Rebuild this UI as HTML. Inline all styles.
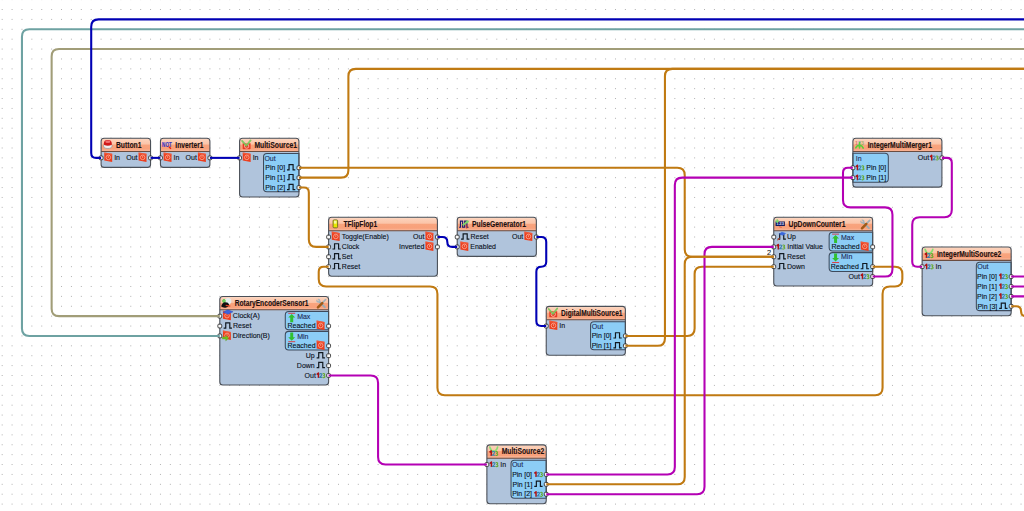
<!DOCTYPE html><html><head><meta charset="utf-8"><style>
*{margin:0;padding:0}
html,body{width:1024px;height:511px;overflow:hidden;background:#fff}
svg{position:absolute;left:0;top:0;font-family:"Liberation Sans",sans-serif}
</style></head><body>
<svg width="1024" height="511" viewBox="0 0 1035.180 516.579">
<defs>
<pattern id="dots" x="1.7" y="9.1" width="10" height="10" patternUnits="userSpaceOnUse"><rect x="0" y="0" width="1" height="1" fill="#b0b0b0"/></pattern>
<linearGradient id="hg" x1="0" y1="0" x2="0" y2="1">
<stop offset="0" stop-color="#fde2d0"/><stop offset="0.12" stop-color="#fcd0b8"/><stop offset="0.45" stop-color="#fbc4a8"/>
<stop offset="0.5" stop-color="#f8a47e"/><stop offset="0.82" stop-color="#f8a07a"/><stop offset="0.88" stop-color="#f9b090"/><stop offset="1" stop-color="#f9b090"/>
</linearGradient>
</defs>
<rect x="0" y="0" width="1040" height="520" fill="url(#dots)"/>
<rect x="102.20" y="139.70" width="50.00" height="29.50" rx="3" fill="#b0c4dc"/>
<path d="M102.20 153.20 V142.70 Q102.20 139.70 105.20 139.70 H149.20 Q152.20 139.70 152.20 142.70 V153.20 Z" fill="url(#hg)"/>
<line x1="102.20" y1="153.20" x2="152.20" y2="153.20" stroke="#6a4c40" stroke-width="1.1"/>
<rect x="102.20" y="139.70" width="50.00" height="29.50" rx="3" fill="none" stroke="#4a4f57" stroke-width="1.1"/>
<g transform="translate(102.20 139.70)"><ellipse cx="6.8" cy="7.8" rx="4.3" ry="2.6" fill="#f0f0f0" stroke="#909090" stroke-width="0.7"/><path d="M2.8 5.2 Q2.8 1.8 6.8 1.8 Q10.8 1.8 10.8 5.2 V6.6 Q6.8 8.8 2.8 6.6 Z" fill="#d01818"/><ellipse cx="6.8" cy="3.6" rx="2.6" ry="1.3" fill="#f07070"/></g>
<text x="117.20" y="149.35" font-size="8.40" font-weight="bold" text-anchor="start" fill="#1c1010" stroke="#1c1010" stroke-width="0.12" textLength="25.80" lengthAdjust="spacingAndGlyphs">Button1</text>
<g transform="translate(105.40 154.10)"><path d="M0 0 L8 1.4 L8 9.6 L0 8.2 Z" fill="#ec3e1e"/><path d="M0 0 L8 1.4 L8 3 L0 1.6 Z" fill="#f46848" opacity="0.6"/><circle cx="4.1" cy="5" r="2.3" fill="none" stroke="#fcc8b8" stroke-width="0.65"/><path d="M4.1 3.6 V5.6" stroke="#fcc8b8" stroke-width="0.6"/></g>
<text x="115.40" y="161.90" font-size="7.70" text-anchor="start" fill="#0a1020" stroke="#0a1020" stroke-width="0.12" textLength="5.91" lengthAdjust="spacingAndGlyphs">In</text>
<g transform="translate(140.10 154.10)"><path d="M0 0 L8 1.4 L8 9.6 L0 8.2 Z" fill="#ec3e1e"/><path d="M0 0 L8 1.4 L8 3 L0 1.6 Z" fill="#f46848" opacity="0.6"/><circle cx="4.1" cy="5" r="2.3" fill="none" stroke="#fcc8b8" stroke-width="0.65"/><path d="M4.1 3.6 V5.6" stroke="#fcc8b8" stroke-width="0.6"/></g>
<text x="139.00" y="161.90" font-size="7.70" text-anchor="end" fill="#0a1020" stroke="#0a1020" stroke-width="0.12" textLength="11.42" lengthAdjust="spacingAndGlyphs">Out</text>
<rect x="162.20" y="139.70" width="50.00" height="29.50" rx="3" fill="#b0c4dc"/>
<path d="M162.20 153.20 V142.70 Q162.20 139.70 165.20 139.70 H209.20 Q212.20 139.70 212.20 142.70 V153.20 Z" fill="url(#hg)"/>
<line x1="162.20" y1="153.20" x2="212.20" y2="153.20" stroke="#6a4c40" stroke-width="1.1"/>
<rect x="162.20" y="139.70" width="50.00" height="29.50" rx="3" fill="none" stroke="#4a4f57" stroke-width="1.1"/>
<g transform="translate(162.20 139.70)"><text x="1.7" y="8.9" font-size="7.6" font-weight="bold" fill="#3434c4" stroke="#3434c4" stroke-width="0.15" textLength="9.8" lengthAdjust="spacingAndGlyphs">NOT</text><path d="M8.6 8.6 L10.6 10.6" stroke="#e82010" stroke-width="1.4"/></g>
<text x="177.20" y="149.35" font-size="8.40" font-weight="bold" text-anchor="start" fill="#1c1010" stroke="#1c1010" stroke-width="0.12" textLength="28.50" lengthAdjust="spacingAndGlyphs">Inverter1</text>
<g transform="translate(165.40 154.10)"><path d="M0 0 L8 1.4 L8 9.6 L0 8.2 Z" fill="#ec3e1e"/><path d="M0 0 L8 1.4 L8 3 L0 1.6 Z" fill="#f46848" opacity="0.6"/><circle cx="4.1" cy="5" r="2.3" fill="none" stroke="#fcc8b8" stroke-width="0.65"/><path d="M4.1 3.6 V5.6" stroke="#fcc8b8" stroke-width="0.6"/></g>
<text x="175.40" y="161.90" font-size="7.70" text-anchor="start" fill="#0a1020" stroke="#0a1020" stroke-width="0.12" textLength="5.91" lengthAdjust="spacingAndGlyphs">In</text>
<g transform="translate(200.10 154.10)"><path d="M0 0 L8 1.4 L8 9.6 L0 8.2 Z" fill="#ec3e1e"/><path d="M0 0 L8 1.4 L8 3 L0 1.6 Z" fill="#f46848" opacity="0.6"/><circle cx="4.1" cy="5" r="2.3" fill="none" stroke="#fcc8b8" stroke-width="0.65"/><path d="M4.1 3.6 V5.6" stroke="#fcc8b8" stroke-width="0.6"/></g>
<text x="199.00" y="161.90" font-size="7.70" text-anchor="end" fill="#0a1020" stroke="#0a1020" stroke-width="0.12" textLength="11.42" lengthAdjust="spacingAndGlyphs">Out</text>
<rect x="242.20" y="139.70" width="60.00" height="59.50" rx="3" fill="#b0c4dc"/>
<path d="M302.20 155.20 H302.20 V193.80 H269.90 Q266.40 193.80 266.40 190.30 V158.70 Q266.40 155.20 269.90 155.20 Z" fill="#8ccdf6" stroke="#3e4a5c" stroke-width="1.05"/>
<path d="M242.20 153.20 V142.70 Q242.20 139.70 245.20 139.70 H299.20 Q302.20 139.70 302.20 142.70 V153.20 Z" fill="url(#hg)"/>
<line x1="242.20" y1="153.20" x2="302.20" y2="153.20" stroke="#6a4c40" stroke-width="1.1"/>
<rect x="242.20" y="139.70" width="60.00" height="59.50" rx="3" fill="none" stroke="#4a4f57" stroke-width="1.1"/>
<g transform="translate(242.20 139.70)"><path d="M3.1 5 H11.1 V10.4 Q11.1 11.1 10.4 11.1 H3.8 Q3.1 11.1 3.1 10.4 Z" fill="#e83a22"/><circle cx="7.1" cy="8" r="2.2" fill="none" stroke="#fdd8c8" stroke-width="0.7"/><path d="M2.5 2.7 L6.8 7.6 L11.1 2.2" fill="none" stroke="#74c85c" stroke-width="1.8" stroke-linecap="round" opacity="0.9"/></g>
<text x="257.20" y="149.35" font-size="8.40" font-weight="bold" text-anchor="start" fill="#1c1010" stroke="#1c1010" stroke-width="0.12" textLength="43.10" lengthAdjust="spacingAndGlyphs">MultiSource1</text>
<g transform="translate(245.40 154.10)"><path d="M0 0 L8 1.4 L8 9.6 L0 8.2 Z" fill="#ec3e1e"/><path d="M0 0 L8 1.4 L8 3 L0 1.6 Z" fill="#f46848" opacity="0.6"/><circle cx="4.1" cy="5" r="2.3" fill="none" stroke="#fcc8b8" stroke-width="0.65"/><path d="M4.1 3.6 V5.6" stroke="#fcc8b8" stroke-width="0.6"/></g>
<text x="255.40" y="161.90" font-size="7.70" text-anchor="start" fill="#0a1020" stroke="#0a1020" stroke-width="0.12" textLength="5.91" lengthAdjust="spacingAndGlyphs">In</text>
<text x="267.30" y="162.40" font-size="7.70" text-anchor="start" fill="#202a58" stroke="#202a58" stroke-width="0.12" textLength="11.42" lengthAdjust="spacingAndGlyphs">Out</text>
<path d="M290.10 171.70 h2.1 v-5.3 h4.1 v5.3 h2.2" fill="none" stroke="#101820" stroke-width="1.2"/>
<text x="288.20" y="171.90" font-size="7.70" text-anchor="end" fill="#0a1020" stroke="#0a1020" stroke-width="0.12" textLength="20.08" lengthAdjust="spacingAndGlyphs">Pin [0]</text>
<path d="M290.10 181.70 h2.1 v-5.3 h4.1 v5.3 h2.2" fill="none" stroke="#101820" stroke-width="1.2"/>
<text x="288.20" y="181.90" font-size="7.70" text-anchor="end" fill="#0a1020" stroke="#0a1020" stroke-width="0.12" textLength="20.08" lengthAdjust="spacingAndGlyphs">Pin [1]</text>
<path d="M290.10 191.70 h2.1 v-5.3 h4.1 v5.3 h2.2" fill="none" stroke="#101820" stroke-width="1.2"/>
<text x="288.20" y="191.90" font-size="7.70" text-anchor="end" fill="#0a1020" stroke="#0a1020" stroke-width="0.12" textLength="20.08" lengthAdjust="spacingAndGlyphs">Pin [2]</text>
<rect x="332.20" y="219.70" width="110.00" height="59.50" rx="3" fill="#b0c4dc"/>
<path d="M332.20 233.20 V222.70 Q332.20 219.70 335.20 219.70 H439.20 Q442.20 219.70 442.20 222.70 V233.20 Z" fill="url(#hg)"/>
<line x1="332.20" y1="233.20" x2="442.20" y2="233.20" stroke="#6a4c40" stroke-width="1.1"/>
<rect x="332.20" y="219.70" width="110.00" height="59.50" rx="3" fill="none" stroke="#4a4f57" stroke-width="1.1"/>
<g transform="translate(332.20 219.70)"><rect x="4.5" y="2.6" width="4.6" height="8" rx="1" fill="#e8e800" stroke="#6c6c20" stroke-width="0.9"/><rect x="5.4" y="3.4" width="2.6" height="3" fill="#f8f8a0"/></g>
<text x="347.20" y="229.35" font-size="8.40" font-weight="bold" text-anchor="start" fill="#1c1010" stroke="#1c1010" stroke-width="0.12" textLength="34.10" lengthAdjust="spacingAndGlyphs">TFlipFlop1</text>
<g transform="translate(335.40 234.10)"><path d="M0 0 L8 1.4 L8 9.6 L0 8.2 Z" fill="#ec3e1e"/><path d="M0 0 L8 1.4 L8 3 L0 1.6 Z" fill="#f46848" opacity="0.6"/><circle cx="4.1" cy="5" r="2.3" fill="none" stroke="#fcc8b8" stroke-width="0.65"/><path d="M4.1 3.6 V5.6" stroke="#fcc8b8" stroke-width="0.6"/></g>
<text x="345.40" y="241.90" font-size="7.70" text-anchor="start" fill="#0a1020" stroke="#0a1020" stroke-width="0.12" textLength="47.65" lengthAdjust="spacingAndGlyphs">Toggle(Enable)</text>
<path d="M336.10 251.70 h2.1 v-5.3 h4.1 v5.3 h2.2" fill="none" stroke="#101820" stroke-width="1.2"/>
<text x="345.60" y="251.90" font-size="7.70" text-anchor="start" fill="#0a1020" stroke="#0a1020" stroke-width="0.12" textLength="17.71" lengthAdjust="spacingAndGlyphs">Clock</text>
<path d="M336.10 261.70 h2.1 v-5.3 h4.1 v5.3 h2.2" fill="none" stroke="#101820" stroke-width="1.2"/>
<text x="345.60" y="261.90" font-size="7.70" text-anchor="start" fill="#0a1020" stroke="#0a1020" stroke-width="0.12" textLength="10.63" lengthAdjust="spacingAndGlyphs">Set</text>
<path d="M336.10 271.70 h2.1 v-5.3 h4.1 v5.3 h2.2" fill="none" stroke="#101820" stroke-width="1.2"/>
<text x="345.60" y="271.90" font-size="7.70" text-anchor="start" fill="#0a1020" stroke="#0a1020" stroke-width="0.12" textLength="18.51" lengthAdjust="spacingAndGlyphs">Reset</text>
<g transform="translate(430.10 234.10)"><path d="M0 0 L8 1.4 L8 9.6 L0 8.2 Z" fill="#ec3e1e"/><path d="M0 0 L8 1.4 L8 3 L0 1.6 Z" fill="#f46848" opacity="0.6"/><circle cx="4.1" cy="5" r="2.3" fill="none" stroke="#fcc8b8" stroke-width="0.65"/><path d="M4.1 3.6 V5.6" stroke="#fcc8b8" stroke-width="0.6"/></g>
<text x="429.00" y="241.90" font-size="7.70" text-anchor="end" fill="#0a1020" stroke="#0a1020" stroke-width="0.12" textLength="11.42" lengthAdjust="spacingAndGlyphs">Out</text>
<g transform="translate(430.10 244.10)"><path d="M0 0 L8 1.4 L8 9.6 L0 8.2 Z" fill="#ec3e1e"/><path d="M0 0 L8 1.4 L8 3 L0 1.6 Z" fill="#f46848" opacity="0.6"/><circle cx="4.1" cy="5" r="2.3" fill="none" stroke="#fcc8b8" stroke-width="0.65"/><path d="M4.1 3.6 V5.6" stroke="#fcc8b8" stroke-width="0.6"/></g>
<text x="429.00" y="251.90" font-size="7.70" text-anchor="end" fill="#0a1020" stroke="#0a1020" stroke-width="0.12" textLength="25.60" lengthAdjust="spacingAndGlyphs">Inverted</text>
<rect x="462.20" y="219.70" width="80.00" height="39.50" rx="3" fill="#b0c4dc"/>
<path d="M462.20 233.20 V222.70 Q462.20 219.70 465.20 219.70 H539.20 Q542.20 219.70 542.20 222.70 V233.20 Z" fill="url(#hg)"/>
<line x1="462.20" y1="233.20" x2="542.20" y2="233.20" stroke="#6a4c40" stroke-width="1.1"/>
<rect x="462.20" y="219.70" width="80.00" height="39.50" rx="3" fill="none" stroke="#4a4f57" stroke-width="1.1"/>
<g transform="translate(462.20 219.70)"><path d="M1.9 10 H3.3 V3.8 H5.5 V10 H7.6 V3.8 H9.8 V10 H11.4" fill="none" stroke="#1a1a70" stroke-width="1.2"/><path d="M9.6 8 V11.5" stroke="#e03020" stroke-width="0.8"/><path d="M5.5 8 L10 4.6" stroke="#7ad868" stroke-width="1.8"/><path d="M8.4 3.2 L12.2 3.4 L10.6 6.6 Z" fill="#7ad868"/></g>
<text x="477.20" y="229.35" font-size="8.40" font-weight="bold" text-anchor="start" fill="#1c1010" stroke="#1c1010" stroke-width="0.12" textLength="54.60" lengthAdjust="spacingAndGlyphs">PulseGenerator1</text>
<path d="M466.10 241.70 h2.1 v-5.3 h4.1 v5.3 h2.2" fill="none" stroke="#101820" stroke-width="1.2"/>
<text x="475.60" y="241.90" font-size="7.70" text-anchor="start" fill="#0a1020" stroke="#0a1020" stroke-width="0.12" textLength="18.51" lengthAdjust="spacingAndGlyphs">Reset</text>
<g transform="translate(465.40 244.10)"><path d="M0 0 L8 1.4 L8 9.6 L0 8.2 Z" fill="#ec3e1e"/><path d="M0 0 L8 1.4 L8 3 L0 1.6 Z" fill="#f46848" opacity="0.6"/><circle cx="4.1" cy="5" r="2.3" fill="none" stroke="#fcc8b8" stroke-width="0.65"/><path d="M4.1 3.6 V5.6" stroke="#fcc8b8" stroke-width="0.6"/></g>
<text x="475.40" y="251.90" font-size="7.70" text-anchor="start" fill="#0a1020" stroke="#0a1020" stroke-width="0.12" textLength="26.00" lengthAdjust="spacingAndGlyphs">Enabled</text>
<g transform="translate(530.10 234.10)"><path d="M0 0 L8 1.4 L8 9.6 L0 8.2 Z" fill="#ec3e1e"/><path d="M0 0 L8 1.4 L8 3 L0 1.6 Z" fill="#f46848" opacity="0.6"/><circle cx="4.1" cy="5" r="2.3" fill="none" stroke="#fcc8b8" stroke-width="0.65"/><path d="M4.1 3.6 V5.6" stroke="#fcc8b8" stroke-width="0.6"/></g>
<text x="529.00" y="241.90" font-size="7.70" text-anchor="end" fill="#0a1020" stroke="#0a1020" stroke-width="0.12" textLength="11.42" lengthAdjust="spacingAndGlyphs">Out</text>
<rect x="222.20" y="299.70" width="110.00" height="89.50" rx="3" fill="#b0c4dc"/>
<path d="M332.20 315.00 H332.20 V333.40 H291.90 Q288.40 333.40 288.40 329.90 V318.50 Q288.40 315.00 291.90 315.00 Z" fill="#8ccdf6" stroke="#3e4a5c" stroke-width="1.05"/>
<path d="M332.20 335.00 H332.20 V353.80 H291.90 Q288.40 353.80 288.40 350.30 V338.50 Q288.40 335.00 291.90 335.00 Z" fill="#8ccdf6" stroke="#3e4a5c" stroke-width="1.05"/>
<path d="M222.20 313.20 V302.70 Q222.20 299.70 225.20 299.70 H329.20 Q332.20 299.70 332.20 302.70 V313.20 Z" fill="url(#hg)"/>
<line x1="222.20" y1="313.20" x2="332.20" y2="313.20" stroke="#6a4c40" stroke-width="1.1"/>
<rect x="222.20" y="299.70" width="110.00" height="89.50" rx="3" fill="none" stroke="#4a4f57" stroke-width="1.1"/>
<g transform="translate(222.20 299.70)"><circle cx="8.4" cy="4.8" r="3.2" fill="#e4ecec"/><path d="M2.4 4.6 H6 M4.2 2.6 V6.6" stroke="#70cc60" stroke-width="2.2"/><path d="M1.4 10.2 Q2 6.4 5 5.8 Q8.6 5.4 9.4 8.2 Q9.2 11.2 5.6 11.3 Q2.6 11.4 1.4 10.2 Z" fill="#101010"/><path d="M6 9 L10.6 9.8" stroke="#e04020" stroke-width="1.2"/></g>
<text x="237.20" y="309.35" font-size="8.40" font-weight="bold" text-anchor="start" fill="#1c1010" stroke="#1c1010" stroke-width="0.12" textLength="74.70" lengthAdjust="spacingAndGlyphs">RotaryEncoderSensor1</text>
<g transform="translate(319.80 302.00)"><path d="M2 2 L8.6 8.6" stroke="#9aacb4" stroke-width="1.9" stroke-linecap="round"/><circle cx="2" cy="2" r="2.1" fill="#a4b4bc"/><path d="M0.2 0.2 L2.2 2.2" stroke="#f8c4a8" stroke-width="1.2"/><path d="M9.4 0.8 L5.6 4.6" stroke="#a0b0b8" stroke-width="1.7" stroke-linecap="round"/><path d="M6 4.4 L1.6 8.8" stroke="#a05a18" stroke-width="2.5" stroke-linecap="round"/></g>
<g transform="translate(225.40 314.10)"><path d="M0 0 L8 1.4 L8 9.6 L0 8.2 Z" fill="#ec3e1e"/><path d="M0 0 L8 1.4 L8 3 L0 1.6 Z" fill="#f46848" opacity="0.6"/><circle cx="4.1" cy="5" r="2.3" fill="none" stroke="#fcc8b8" stroke-width="0.65"/><path d="M4.1 3.6 V5.6" stroke="#fcc8b8" stroke-width="0.6"/></g>
<path d="M225.40 315.60 l4.8 -2.4 l5.4 2.0 l-5.0 2.6 Z" fill="#3a64e0" stroke="#2848b0" stroke-width="0.4"/>
<text x="235.40" y="321.90" font-size="7.70" text-anchor="start" fill="#0a1020" stroke="#0a1020" stroke-width="0.12" textLength="27.16" lengthAdjust="spacingAndGlyphs">Clock(A)</text>
<path d="M226.10 331.70 h2.1 v-5.3 h4.1 v5.3 h2.2" fill="none" stroke="#101820" stroke-width="1.2"/>
<text x="235.60" y="331.90" font-size="7.70" text-anchor="start" fill="#0a1020" stroke="#0a1020" stroke-width="0.12" textLength="18.51" lengthAdjust="spacingAndGlyphs">Reset</text>
<g transform="translate(225.40 334.10)"><path d="M0 0 L8 1.4 L8 9.6 L0 8.2 Z" fill="#ec3e1e"/><path d="M0 0 L8 1.4 L8 3 L0 1.6 Z" fill="#f46848" opacity="0.6"/><circle cx="4.1" cy="5" r="2.3" fill="none" stroke="#fcc8b8" stroke-width="0.65"/><path d="M4.1 3.6 V5.6" stroke="#fcc8b8" stroke-width="0.6"/></g>
<path d="M224.80 340.60 h3.4 v-1.8 l3 2.9 l-3 2.9 v-1.8 h-3.4 Z" fill="#70c020" stroke="#4a9010" stroke-width="0.3"/>
<text x="235.40" y="341.90" font-size="7.70" text-anchor="start" fill="#0a1020" stroke="#0a1020" stroke-width="0.12" textLength="37.40" lengthAdjust="spacingAndGlyphs">Direction(B)</text>
<g transform="translate(291.40 316.20)"><rect x="0" y="0" width="7" height="0.9" fill="#e03030"/><path d="M3.5 1.3 L7 4.8 H5 V9.5 H2 V4.8 H0 Z" fill="#30c030"/></g>
<text x="300.40" y="322.30" font-size="7.70" text-anchor="start" fill="#202a58" stroke="#202a58" stroke-width="0.12" textLength="13.38" lengthAdjust="spacingAndGlyphs">Max</text>
<g transform="translate(291.40 336.20)"><rect x="0" y="8.8" width="7" height="0.9" fill="#e03030"/><path d="M3.5 8.2 L7 4.7 H5 V0 H2 V4.7 H0 Z" fill="#30c030"/></g>
<text x="300.40" y="342.30" font-size="7.70" text-anchor="start" fill="#202a58" stroke="#202a58" stroke-width="0.12" textLength="11.42" lengthAdjust="spacingAndGlyphs">Min</text>
<g transform="translate(320.10 324.10)"><path d="M0 0 L8 1.4 L8 9.6 L0 8.2 Z" fill="#ec3e1e"/><path d="M0 0 L8 1.4 L8 3 L0 1.6 Z" fill="#f46848" opacity="0.6"/><circle cx="4.1" cy="5" r="2.3" fill="none" stroke="#fcc8b8" stroke-width="0.65"/><path d="M4.1 3.6 V5.6" stroke="#fcc8b8" stroke-width="0.6"/></g>
<text x="319.00" y="331.90" font-size="7.70" text-anchor="end" fill="#0a1020" stroke="#0a1020" stroke-width="0.12" textLength="28.36" lengthAdjust="spacingAndGlyphs">Reached</text>
<g transform="translate(320.10 344.10)"><path d="M0 0 L8 1.4 L8 9.6 L0 8.2 Z" fill="#ec3e1e"/><path d="M0 0 L8 1.4 L8 3 L0 1.6 Z" fill="#f46848" opacity="0.6"/><circle cx="4.1" cy="5" r="2.3" fill="none" stroke="#fcc8b8" stroke-width="0.65"/><path d="M4.1 3.6 V5.6" stroke="#fcc8b8" stroke-width="0.6"/></g>
<text x="319.00" y="351.90" font-size="7.70" text-anchor="end" fill="#0a1020" stroke="#0a1020" stroke-width="0.12" textLength="28.36" lengthAdjust="spacingAndGlyphs">Reached</text>
<path d="M320.10 361.70 h2.1 v-5.3 h4.1 v5.3 h2.2" fill="none" stroke="#101820" stroke-width="1.2"/>
<text x="318.20" y="361.90" font-size="7.70" text-anchor="end" fill="#0a1020" stroke="#0a1020" stroke-width="0.12" textLength="9.06" lengthAdjust="spacingAndGlyphs">Up</text>
<path d="M320.10 371.70 h2.1 v-5.3 h4.1 v5.3 h2.2" fill="none" stroke="#101820" stroke-width="1.2"/>
<text x="318.20" y="371.90" font-size="7.70" text-anchor="end" fill="#0a1020" stroke="#0a1020" stroke-width="0.12" textLength="18.11" lengthAdjust="spacingAndGlyphs">Down</text>
<path d="M320.20 378.60 l1.7 -1.5 v5.1" fill="none" stroke="#b01010" stroke-width="1.5" stroke-linejoin="round"/><path d="M323.00 378.70 Q323.30 377.60 324.30 377.60 Q325.50 377.70 325.30 378.90 Q324.90 379.90 323.10 381.50 H325.70" fill="none" stroke="#3a80b0" stroke-width="1.05"/><path d="M326.10 378.10 Q327.30 377.10 328.20 378.20 Q328.40 379.40 326.90 379.60 Q328.80 380.00 328.40 381.20 Q327.50 382.30 326.00 381.40" fill="none" stroke="#64a82c" stroke-width="1.05"/>
<text x="319.30" y="381.90" font-size="7.70" text-anchor="end" fill="#0a1020" stroke="#0a1020" stroke-width="0.12" textLength="11.42" lengthAdjust="spacingAndGlyphs">Out</text>
<rect x="552.20" y="309.70" width="80.00" height="49.50" rx="3" fill="#b0c4dc"/>
<path d="M632.20 325.20 H632.20 V353.60 H600.50 Q597.00 353.60 597.00 350.10 V328.70 Q597.00 325.20 600.50 325.20 Z" fill="#8ccdf6" stroke="#3e4a5c" stroke-width="1.05"/>
<path d="M552.20 323.20 V312.70 Q552.20 309.70 555.20 309.70 H629.20 Q632.20 309.70 632.20 312.70 V323.20 Z" fill="url(#hg)"/>
<line x1="552.20" y1="323.20" x2="632.20" y2="323.20" stroke="#6a4c40" stroke-width="1.1"/>
<rect x="552.20" y="309.70" width="80.00" height="49.50" rx="3" fill="none" stroke="#4a4f57" stroke-width="1.1"/>
<g transform="translate(552.20 309.70)"><path d="M3.1 5 H11.1 V10.4 Q11.1 11.1 10.4 11.1 H3.8 Q3.1 11.1 3.1 10.4 Z" fill="#e83a22"/><circle cx="7.1" cy="8" r="2.2" fill="none" stroke="#fdd8c8" stroke-width="0.7"/><path d="M2.5 2.7 L6.8 7.6 L11.1 2.2" fill="none" stroke="#74c85c" stroke-width="1.8" stroke-linecap="round" opacity="0.9"/></g>
<text x="567.20" y="319.35" font-size="8.40" font-weight="bold" text-anchor="start" fill="#1c1010" stroke="#1c1010" stroke-width="0.12" textLength="62.10" lengthAdjust="spacingAndGlyphs">DigitalMultiSource1</text>
<g transform="translate(555.40 324.10)"><path d="M0 0 L8 1.4 L8 9.6 L0 8.2 Z" fill="#ec3e1e"/><path d="M0 0 L8 1.4 L8 3 L0 1.6 Z" fill="#f46848" opacity="0.6"/><circle cx="4.1" cy="5" r="2.3" fill="none" stroke="#fcc8b8" stroke-width="0.65"/><path d="M4.1 3.6 V5.6" stroke="#fcc8b8" stroke-width="0.6"/></g>
<text x="565.40" y="331.90" font-size="7.70" text-anchor="start" fill="#0a1020" stroke="#0a1020" stroke-width="0.12" textLength="5.91" lengthAdjust="spacingAndGlyphs">In</text>
<text x="598.30" y="332.40" font-size="7.70" text-anchor="start" fill="#202a58" stroke="#202a58" stroke-width="0.12" textLength="11.42" lengthAdjust="spacingAndGlyphs">Out</text>
<path d="M620.10 341.70 h2.1 v-5.3 h4.1 v5.3 h2.2" fill="none" stroke="#101820" stroke-width="1.2"/>
<text x="618.20" y="341.90" font-size="7.70" text-anchor="end" fill="#0a1020" stroke="#0a1020" stroke-width="0.12" textLength="20.08" lengthAdjust="spacingAndGlyphs">Pin [0]</text>
<path d="M620.10 351.70 h2.1 v-5.3 h4.1 v5.3 h2.2" fill="none" stroke="#101820" stroke-width="1.2"/>
<text x="618.20" y="351.90" font-size="7.70" text-anchor="end" fill="#0a1020" stroke="#0a1020" stroke-width="0.12" textLength="20.08" lengthAdjust="spacingAndGlyphs">Pin [1]</text>
<rect x="492.20" y="449.70" width="60.00" height="59.50" rx="3" fill="#b0c4dc"/>
<path d="M552.20 465.30 H552.20 V503.70 H520.10 Q516.60 503.70 516.60 500.20 V468.80 Q516.60 465.30 520.10 465.30 Z" fill="#8ccdf6" stroke="#3e4a5c" stroke-width="1.05"/>
<path d="M492.20 463.20 V452.70 Q492.20 449.70 495.20 449.70 H549.20 Q552.20 449.70 552.20 452.70 V463.20 Z" fill="url(#hg)"/>
<line x1="492.20" y1="463.20" x2="552.20" y2="463.20" stroke="#6a4c40" stroke-width="1.1"/>
<rect x="492.20" y="449.70" width="60.00" height="59.50" rx="3" fill="none" stroke="#4a4f57" stroke-width="1.1"/>
<g transform="translate(492.20 449.70)"><path d="M3 2.3 Q4 6.2 6.8 6.6 Q9.8 6.2 10.8 2.3" fill="none" stroke="#88e070" stroke-width="1.7" stroke-linecap="round"/><path d="M2.70 7.60 l1.7 -1.5 v5.1" fill="none" stroke="#b01010" stroke-width="1.5" stroke-linejoin="round"/><path d="M5.50 7.70 Q5.80 6.60 6.80 6.60 Q8.00 6.70 7.80 7.90 Q7.40 8.90 5.60 10.50 H8.20" fill="none" stroke="#3a80b0" stroke-width="1.05"/><path d="M8.60 7.10 Q9.80 6.10 10.70 7.20 Q10.90 8.40 9.40 8.60 Q11.30 9.00 10.90 10.20 Q10.00 11.30 8.50 10.40" fill="none" stroke="#64a82c" stroke-width="1.05"/></g>
<text x="507.20" y="459.35" font-size="8.40" font-weight="bold" text-anchor="start" fill="#1c1010" stroke="#1c1010" stroke-width="0.12" textLength="42.90" lengthAdjust="spacingAndGlyphs">MultiSource2</text>
<path d="M495.10 468.60 l1.7 -1.5 v5.1" fill="none" stroke="#b01010" stroke-width="1.5" stroke-linejoin="round"/><path d="M497.90 468.70 Q498.20 467.60 499.20 467.60 Q500.40 467.70 500.20 468.90 Q499.80 469.90 498.00 471.50 H500.60" fill="none" stroke="#3a80b0" stroke-width="1.05"/><path d="M501.00 468.10 Q502.20 467.10 503.10 468.20 Q503.30 469.40 501.80 469.60 Q503.70 470.00 503.30 471.20 Q502.40 472.30 500.90 471.40" fill="none" stroke="#64a82c" stroke-width="1.05"/>
<text x="505.80" y="471.90" font-size="7.70" text-anchor="start" fill="#0a1020" stroke="#0a1020" stroke-width="0.12" textLength="5.91" lengthAdjust="spacingAndGlyphs">In</text>
<text x="517.50" y="472.40" font-size="7.70" text-anchor="start" fill="#202a58" stroke="#202a58" stroke-width="0.12" textLength="11.42" lengthAdjust="spacingAndGlyphs">Out</text>
<path d="M540.20 478.60 l1.7 -1.5 v5.1" fill="none" stroke="#b01010" stroke-width="1.5" stroke-linejoin="round"/><path d="M543.00 478.70 Q543.30 477.60 544.30 477.60 Q545.50 477.70 545.30 478.90 Q544.90 479.90 543.10 481.50 H545.70" fill="none" stroke="#3a80b0" stroke-width="1.05"/><path d="M546.10 478.10 Q547.30 477.10 548.20 478.20 Q548.40 479.40 546.90 479.60 Q548.80 480.00 548.40 481.20 Q547.50 482.30 546.00 481.40" fill="none" stroke="#64a82c" stroke-width="1.05"/>
<text x="537.80" y="481.90" font-size="7.70" text-anchor="end" fill="#0a1020" stroke="#0a1020" stroke-width="0.12" textLength="20.08" lengthAdjust="spacingAndGlyphs">Pin [0]</text>
<path d="M540.10 491.70 h2.1 v-5.3 h4.1 v5.3 h2.2" fill="none" stroke="#101820" stroke-width="1.2"/>
<text x="538.20" y="491.90" font-size="7.70" text-anchor="end" fill="#0a1020" stroke="#0a1020" stroke-width="0.12" textLength="20.08" lengthAdjust="spacingAndGlyphs">Pin [1]</text>
<path d="M540.20 498.60 l1.7 -1.5 v5.1" fill="none" stroke="#b01010" stroke-width="1.5" stroke-linejoin="round"/><path d="M543.00 498.70 Q543.30 497.60 544.30 497.60 Q545.50 497.70 545.30 498.90 Q544.90 499.90 543.10 501.50 H545.70" fill="none" stroke="#3a80b0" stroke-width="1.05"/><path d="M546.10 498.10 Q547.30 497.10 548.20 498.20 Q548.40 499.40 546.90 499.60 Q548.80 500.00 548.40 501.20 Q547.50 502.30 546.00 501.40" fill="none" stroke="#64a82c" stroke-width="1.05"/>
<text x="537.80" y="501.90" font-size="7.70" text-anchor="end" fill="#0a1020" stroke="#0a1020" stroke-width="0.12" textLength="20.08" lengthAdjust="spacingAndGlyphs">Pin [2]</text>
<rect x="782.20" y="219.70" width="100.00" height="69.50" rx="3" fill="#b0c4dc"/>
<path d="M882.20 234.80 H882.20 V253.80 H841.70 Q838.20 253.80 838.20 250.30 V238.30 Q838.20 234.80 841.70 234.80 Z" fill="#8ccdf6" stroke="#3e4a5c" stroke-width="1.05"/>
<path d="M882.20 255.40 H882.20 V274.40 H841.70 Q838.20 274.40 838.20 270.90 V258.90 Q838.20 255.40 841.70 255.40 Z" fill="#8ccdf6" stroke="#3e4a5c" stroke-width="1.05"/>
<path d="M782.20 233.20 V222.70 Q782.20 219.70 785.20 219.70 H879.20 Q882.20 219.70 882.20 222.70 V233.20 Z" fill="url(#hg)"/>
<line x1="782.20" y1="233.20" x2="882.20" y2="233.20" stroke="#6a4c40" stroke-width="1.1"/>
<rect x="782.20" y="219.70" width="100.00" height="69.50" rx="3" fill="none" stroke="#4a4f57" stroke-width="1.1"/>
<g transform="translate(782.20 219.70)"><rect x="1.8" y="4.2" width="9.5" height="4.6" fill="#141c5c"/><text x="2.6" y="8.2" font-size="4.4" font-weight="bold" fill="#c8d4f8" textLength="8" lengthAdjust="spacingAndGlyphs">123</text><path d="M1.6 3.9 H5.4 M3.5 2 V5.8" stroke="#78d868" stroke-width="1.3"/><path d="M5.5 9.6 L8 10.2" stroke="#e04020" stroke-width="0.7"/></g>
<text x="797.20" y="229.35" font-size="8.40" font-weight="bold" text-anchor="start" fill="#1c1010" stroke="#1c1010" stroke-width="0.12" textLength="57.50" lengthAdjust="spacingAndGlyphs">UpDownCounter1</text>
<g transform="translate(869.80 222.00)"><path d="M2 2 L8.6 8.6" stroke="#9aacb4" stroke-width="1.9" stroke-linecap="round"/><circle cx="2" cy="2" r="2.1" fill="#a4b4bc"/><path d="M0.2 0.2 L2.2 2.2" stroke="#f8c4a8" stroke-width="1.2"/><path d="M9.4 0.8 L5.6 4.6" stroke="#a0b0b8" stroke-width="1.7" stroke-linecap="round"/><path d="M6 4.4 L1.6 8.8" stroke="#a05a18" stroke-width="2.5" stroke-linecap="round"/></g>
<path d="M786.10 241.70 h2.1 v-5.3 h4.1 v5.3 h2.2" fill="none" stroke="#101820" stroke-width="1.2"/>
<path d="M787.20 236.60 l3.2 -2.2 l4.4 1.4 l-3.6 2.4 Z" fill="#3a6ae8" opacity="0.9"/>
<path d="M786.20 243.00 l2 -2.6" stroke="#e04020" stroke-width="1"/>
<text x="795.60" y="241.90" font-size="7.70" text-anchor="start" fill="#0a1020" stroke="#0a1020" stroke-width="0.12" textLength="9.06" lengthAdjust="spacingAndGlyphs">Up</text>
<path d="M785.10 248.60 l1.7 -1.5 v5.1" fill="none" stroke="#b01010" stroke-width="1.5" stroke-linejoin="round"/><path d="M787.90 248.70 Q788.20 247.60 789.20 247.60 Q790.40 247.70 790.20 248.90 Q789.80 249.90 788.00 251.50 H790.60" fill="none" stroke="#3a80b0" stroke-width="1.05"/><path d="M791.00 248.10 Q792.20 247.10 793.10 248.20 Q793.30 249.40 791.80 249.60 Q793.70 250.00 793.30 251.20 Q792.40 252.30 790.90 251.40" fill="none" stroke="#64a82c" stroke-width="1.05"/>
<text x="795.80" y="251.90" font-size="7.70" text-anchor="start" fill="#0a1020" stroke="#0a1020" stroke-width="0.12" textLength="36.10" lengthAdjust="spacingAndGlyphs">Initial Value</text>
<path d="M786.10 261.70 h2.1 v-5.3 h4.1 v5.3 h2.2" fill="none" stroke="#101820" stroke-width="1.2"/>
<text x="795.60" y="261.90" font-size="7.70" text-anchor="start" fill="#0a1020" stroke="#0a1020" stroke-width="0.12" textLength="18.51" lengthAdjust="spacingAndGlyphs">Reset</text>
<path d="M786.10 271.70 h2.1 v-5.3 h4.1 v5.3 h2.2" fill="none" stroke="#101820" stroke-width="1.2"/>
<text x="795.60" y="271.90" font-size="7.70" text-anchor="start" fill="#0a1020" stroke="#0a1020" stroke-width="0.12" textLength="18.11" lengthAdjust="spacingAndGlyphs">Down</text>
<g transform="translate(841.20 236.20)"><rect x="0" y="0" width="7" height="0.9" fill="#e03030"/><path d="M3.5 1.3 L7 4.8 H5 V9.5 H2 V4.8 H0 Z" fill="#30c030"/></g>
<text x="850.20" y="242.30" font-size="7.70" text-anchor="start" fill="#202a58" stroke="#202a58" stroke-width="0.12" textLength="13.38" lengthAdjust="spacingAndGlyphs">Max</text>
<g transform="translate(841.20 256.20)"><rect x="0" y="8.8" width="7" height="0.9" fill="#e03030"/><path d="M3.5 8.2 L7 4.7 H5 V0 H2 V4.7 H0 Z" fill="#30c030"/></g>
<text x="850.20" y="262.30" font-size="7.70" text-anchor="start" fill="#202a58" stroke="#202a58" stroke-width="0.12" textLength="11.42" lengthAdjust="spacingAndGlyphs">Min</text>
<g transform="translate(870.10 244.10)"><path d="M0 0 L8 1.4 L8 9.6 L0 8.2 Z" fill="#ec3e1e"/><path d="M0 0 L8 1.4 L8 3 L0 1.6 Z" fill="#f46848" opacity="0.6"/><circle cx="4.1" cy="5" r="2.3" fill="none" stroke="#fcc8b8" stroke-width="0.65"/><path d="M4.1 3.6 V5.6" stroke="#fcc8b8" stroke-width="0.6"/></g>
<text x="869.00" y="251.90" font-size="7.70" text-anchor="end" fill="#0a1020" stroke="#0a1020" stroke-width="0.12" textLength="28.36" lengthAdjust="spacingAndGlyphs">Reached</text>
<path d="M870.10 271.70 h2.1 v-5.3 h4.1 v5.3 h2.2" fill="none" stroke="#101820" stroke-width="1.2"/>
<text x="868.20" y="271.90" font-size="7.70" text-anchor="end" fill="#0a1020" stroke="#0a1020" stroke-width="0.12" textLength="28.36" lengthAdjust="spacingAndGlyphs">Reached</text>
<path d="M870.20 278.60 l1.7 -1.5 v5.1" fill="none" stroke="#b01010" stroke-width="1.5" stroke-linejoin="round"/><path d="M873.00 278.70 Q873.30 277.60 874.30 277.60 Q875.50 277.70 875.30 278.90 Q874.90 279.90 873.10 281.50 H875.70" fill="none" stroke="#3a80b0" stroke-width="1.05"/><path d="M876.10 278.10 Q877.30 277.10 878.20 278.20 Q878.40 279.40 876.90 279.60 Q878.80 280.00 878.40 281.20 Q877.50 282.30 876.00 281.40" fill="none" stroke="#64a82c" stroke-width="1.05"/>
<text x="869.30" y="281.90" font-size="7.70" text-anchor="end" fill="#0a1020" stroke="#0a1020" stroke-width="0.12" textLength="11.42" lengthAdjust="spacingAndGlyphs">Out</text>
<text x="775.40" y="257.50" font-size="8.20" text-anchor="start" fill="#181818" stroke="#181818" stroke-width="0.12" textLength="4.20" lengthAdjust="spacingAndGlyphs">2</text>
<rect x="862.20" y="139.70" width="90.00" height="49.50" rx="3" fill="#b0c4dc"/>
<path d="M862.20 155.00 H862.20 V184.20 H894.50 Q898.00 184.20 898.00 180.70 V158.50 Q898.00 155.00 894.50 155.00 Z" fill="#8ccdf6" stroke="#3e4a5c" stroke-width="1.05"/>
<path d="M862.20 153.20 V142.70 Q862.20 139.70 865.20 139.70 H949.20 Q952.20 139.70 952.20 142.70 V153.20 Z" fill="url(#hg)"/>
<line x1="862.20" y1="153.20" x2="952.20" y2="153.20" stroke="#6a4c40" stroke-width="1.1"/>
<rect x="862.20" y="139.70" width="90.00" height="49.50" rx="3" fill="none" stroke="#4a4f57" stroke-width="1.1"/>
<g transform="translate(862.20 139.70)"><g opacity="0.55"><text x="2.2" y="6.6" font-size="5.6" font-weight="bold" fill="#c04040" textLength="3" lengthAdjust="spacingAndGlyphs">1</text><text x="5.2" y="6.6" font-size="5.6" font-weight="bold" fill="#4080c0" textLength="3" lengthAdjust="spacingAndGlyphs">2</text><text x="8.1" y="6.6" font-size="5.6" font-weight="bold" fill="#60a040" textLength="3" lengthAdjust="spacingAndGlyphs">3</text></g><path d="M6.7 4.4 V10 M2.9 9.8 Q4 7.4 6.7 6.6 Q9.4 7.4 10.5 10" fill="none" stroke="#58d038" stroke-width="1.6" stroke-linecap="round"/></g>
<text x="877.20" y="149.35" font-size="8.40" font-weight="bold" text-anchor="start" fill="#1c1010" stroke="#1c1010" stroke-width="0.12" textLength="64.90" lengthAdjust="spacingAndGlyphs">IntegerMultiMerger1</text>
<text x="865.20" y="162.40" font-size="7.70" text-anchor="start" fill="#202a58" stroke="#202a58" stroke-width="0.12" textLength="5.91" lengthAdjust="spacingAndGlyphs">In</text>
<path d="M865.10 168.60 l1.7 -1.5 v5.1" fill="none" stroke="#b01010" stroke-width="1.5" stroke-linejoin="round"/><path d="M867.90 168.70 Q868.20 167.60 869.20 167.60 Q870.40 167.70 870.20 168.90 Q869.80 169.90 868.00 171.50 H870.60" fill="none" stroke="#3a80b0" stroke-width="1.05"/><path d="M871.00 168.10 Q872.20 167.10 873.10 168.20 Q873.30 169.40 871.80 169.60 Q873.70 170.00 873.30 171.20 Q872.40 172.30 870.90 171.40" fill="none" stroke="#64a82c" stroke-width="1.05"/>
<text x="875.80" y="171.90" font-size="7.70" text-anchor="start" fill="#0a1020" stroke="#0a1020" stroke-width="0.12" textLength="20.08" lengthAdjust="spacingAndGlyphs">Pin [0]</text>
<path d="M865.10 178.60 l1.7 -1.5 v5.1" fill="none" stroke="#b01010" stroke-width="1.5" stroke-linejoin="round"/><path d="M867.90 178.70 Q868.20 177.60 869.20 177.60 Q870.40 177.70 870.20 178.90 Q869.80 179.90 868.00 181.50 H870.60" fill="none" stroke="#3a80b0" stroke-width="1.05"/><path d="M871.00 178.10 Q872.20 177.10 873.10 178.20 Q873.30 179.40 871.80 179.60 Q873.70 180.00 873.30 181.20 Q872.40 182.30 870.90 181.40" fill="none" stroke="#64a82c" stroke-width="1.05"/>
<text x="875.80" y="181.90" font-size="7.70" text-anchor="start" fill="#0a1020" stroke="#0a1020" stroke-width="0.12" textLength="20.08" lengthAdjust="spacingAndGlyphs">Pin [1]</text>
<path d="M940.20 158.60 l1.7 -1.5 v5.1" fill="none" stroke="#b01010" stroke-width="1.5" stroke-linejoin="round"/><path d="M943.00 158.70 Q943.30 157.60 944.30 157.60 Q945.50 157.70 945.30 158.90 Q944.90 159.90 943.10 161.50 H945.70" fill="none" stroke="#3a80b0" stroke-width="1.05"/><path d="M946.10 158.10 Q947.30 157.10 948.20 158.20 Q948.40 159.40 946.90 159.60 Q948.80 160.00 948.40 161.20 Q947.50 162.30 946.00 161.40" fill="none" stroke="#64a82c" stroke-width="1.05"/>
<text x="939.30" y="161.90" font-size="7.70" text-anchor="end" fill="#0a1020" stroke="#0a1020" stroke-width="0.12" textLength="11.42" lengthAdjust="spacingAndGlyphs">Out</text>
<rect x="932.20" y="249.70" width="90.00" height="69.50" rx="3" fill="#b0c4dc"/>
<path d="M1022.20 265.20 H1022.20 V314.00 H990.50 Q987.00 314.00 987.00 310.50 V268.70 Q987.00 265.20 990.50 265.20 Z" fill="#8ccdf6" stroke="#3e4a5c" stroke-width="1.05"/>
<path d="M932.20 263.20 V252.70 Q932.20 249.70 935.20 249.70 H1019.20 Q1022.20 249.70 1022.20 252.70 V263.20 Z" fill="url(#hg)"/>
<line x1="932.20" y1="263.20" x2="1022.20" y2="263.20" stroke="#6a4c40" stroke-width="1.1"/>
<rect x="932.20" y="249.70" width="90.00" height="69.50" rx="3" fill="none" stroke="#4a4f57" stroke-width="1.1"/>
<g transform="translate(932.20 249.70)"><path d="M3 2.3 Q4 6.2 6.8 6.6 Q9.8 6.2 10.8 2.3" fill="none" stroke="#88e070" stroke-width="1.7" stroke-linecap="round"/><path d="M2.70 7.60 l1.7 -1.5 v5.1" fill="none" stroke="#b01010" stroke-width="1.5" stroke-linejoin="round"/><path d="M5.50 7.70 Q5.80 6.60 6.80 6.60 Q8.00 6.70 7.80 7.90 Q7.40 8.90 5.60 10.50 H8.20" fill="none" stroke="#3a80b0" stroke-width="1.05"/><path d="M8.60 7.10 Q9.80 6.10 10.70 7.20 Q10.90 8.40 9.40 8.60 Q11.30 9.00 10.90 10.20 Q10.00 11.30 8.50 10.40" fill="none" stroke="#64a82c" stroke-width="1.05"/></g>
<text x="947.20" y="259.35" font-size="8.40" font-weight="bold" text-anchor="start" fill="#1c1010" stroke="#1c1010" stroke-width="0.12" textLength="65.00" lengthAdjust="spacingAndGlyphs">IntegerMultiSource2</text>
<path d="M935.10 268.60 l1.7 -1.5 v5.1" fill="none" stroke="#b01010" stroke-width="1.5" stroke-linejoin="round"/><path d="M937.90 268.70 Q938.20 267.60 939.20 267.60 Q940.40 267.70 940.20 268.90 Q939.80 269.90 938.00 271.50 H940.60" fill="none" stroke="#3a80b0" stroke-width="1.05"/><path d="M941.00 268.10 Q942.20 267.10 943.10 268.20 Q943.30 269.40 941.80 269.60 Q943.70 270.00 943.30 271.20 Q942.40 272.30 940.90 271.40" fill="none" stroke="#64a82c" stroke-width="1.05"/>
<text x="945.80" y="271.90" font-size="7.70" text-anchor="start" fill="#0a1020" stroke="#0a1020" stroke-width="0.12" textLength="5.91" lengthAdjust="spacingAndGlyphs">In</text>
<text x="987.90" y="272.40" font-size="7.70" text-anchor="start" fill="#202a58" stroke="#202a58" stroke-width="0.12" textLength="11.42" lengthAdjust="spacingAndGlyphs">Out</text>
<path d="M1010.20 278.60 l1.7 -1.5 v5.1" fill="none" stroke="#b01010" stroke-width="1.5" stroke-linejoin="round"/><path d="M1013.00 278.70 Q1013.30 277.60 1014.30 277.60 Q1015.50 277.70 1015.30 278.90 Q1014.90 279.90 1013.10 281.50 H1015.70" fill="none" stroke="#3a80b0" stroke-width="1.05"/><path d="M1016.10 278.10 Q1017.30 277.10 1018.20 278.20 Q1018.40 279.40 1016.90 279.60 Q1018.80 280.00 1018.40 281.20 Q1017.50 282.30 1016.00 281.40" fill="none" stroke="#64a82c" stroke-width="1.05"/>
<text x="1007.80" y="281.90" font-size="7.70" text-anchor="end" fill="#0a1020" stroke="#0a1020" stroke-width="0.12" textLength="20.08" lengthAdjust="spacingAndGlyphs">Pin [0]</text>
<path d="M1010.20 288.60 l1.7 -1.5 v5.1" fill="none" stroke="#b01010" stroke-width="1.5" stroke-linejoin="round"/><path d="M1013.00 288.70 Q1013.30 287.60 1014.30 287.60 Q1015.50 287.70 1015.30 288.90 Q1014.90 289.90 1013.10 291.50 H1015.70" fill="none" stroke="#3a80b0" stroke-width="1.05"/><path d="M1016.10 288.10 Q1017.30 287.10 1018.20 288.20 Q1018.40 289.40 1016.90 289.60 Q1018.80 290.00 1018.40 291.20 Q1017.50 292.30 1016.00 291.40" fill="none" stroke="#64a82c" stroke-width="1.05"/>
<text x="1007.80" y="291.90" font-size="7.70" text-anchor="end" fill="#0a1020" stroke="#0a1020" stroke-width="0.12" textLength="20.08" lengthAdjust="spacingAndGlyphs">Pin [1]</text>
<path d="M1010.20 298.60 l1.7 -1.5 v5.1" fill="none" stroke="#b01010" stroke-width="1.5" stroke-linejoin="round"/><path d="M1013.00 298.70 Q1013.30 297.60 1014.30 297.60 Q1015.50 297.70 1015.30 298.90 Q1014.90 299.90 1013.10 301.50 H1015.70" fill="none" stroke="#3a80b0" stroke-width="1.05"/><path d="M1016.10 298.10 Q1017.30 297.10 1018.20 298.20 Q1018.40 299.40 1016.90 299.60 Q1018.80 300.00 1018.40 301.20 Q1017.50 302.30 1016.00 301.40" fill="none" stroke="#64a82c" stroke-width="1.05"/>
<text x="1007.80" y="301.90" font-size="7.70" text-anchor="end" fill="#0a1020" stroke="#0a1020" stroke-width="0.12" textLength="20.08" lengthAdjust="spacingAndGlyphs">Pin [2]</text>
<path d="M1010.10 311.70 h2.1 v-5.3 h4.1 v5.3 h2.2" fill="none" stroke="#101820" stroke-width="1.2"/>
<text x="1008.20" y="311.90" font-size="7.70" text-anchor="end" fill="#0a1020" stroke="#0a1020" stroke-width="0.12" textLength="20.08" lengthAdjust="spacingAndGlyphs">Pin [3]</text>
<rect x="100.25" y="157.70" width="3.9" height="3.8" rx="1" fill="#f8f8f8" stroke="#262626" stroke-width="0.85"/>
<rect x="150.25" y="157.70" width="3.9" height="3.8" rx="1" fill="#f8f8f8" stroke="#262626" stroke-width="0.85"/>
<rect x="160.25" y="157.70" width="3.9" height="3.8" rx="1" fill="#f8f8f8" stroke="#262626" stroke-width="0.85"/>
<rect x="210.25" y="157.70" width="3.9" height="3.8" rx="1" fill="#f8f8f8" stroke="#262626" stroke-width="0.85"/>
<rect x="240.25" y="157.70" width="3.9" height="3.8" rx="1" fill="#f8f8f8" stroke="#262626" stroke-width="0.85"/>
<rect x="300.25" y="167.70" width="3.9" height="3.8" rx="1" fill="#f8f8f8" stroke="#262626" stroke-width="0.85"/>
<rect x="300.25" y="177.70" width="3.9" height="3.8" rx="1" fill="#f8f8f8" stroke="#262626" stroke-width="0.85"/>
<rect x="300.25" y="187.70" width="3.9" height="3.8" rx="1" fill="#f8f8f8" stroke="#262626" stroke-width="0.85"/>
<rect x="330.25" y="237.70" width="3.9" height="3.8" rx="1" fill="#f8f8f8" stroke="#262626" stroke-width="0.85"/>
<rect x="330.25" y="247.70" width="3.9" height="3.8" rx="1" fill="#f8f8f8" stroke="#262626" stroke-width="0.85"/>
<rect x="330.25" y="257.70" width="3.9" height="3.8" rx="1" fill="#f8f8f8" stroke="#262626" stroke-width="0.85"/>
<rect x="330.25" y="267.70" width="3.9" height="3.8" rx="1" fill="#f8f8f8" stroke="#262626" stroke-width="0.85"/>
<rect x="440.25" y="237.70" width="3.9" height="3.8" rx="1" fill="#f8f8f8" stroke="#262626" stroke-width="0.85"/>
<rect x="440.25" y="247.70" width="3.9" height="3.8" rx="1" fill="#f8f8f8" stroke="#262626" stroke-width="0.85"/>
<rect x="460.25" y="237.70" width="3.9" height="3.8" rx="1" fill="#f8f8f8" stroke="#262626" stroke-width="0.85"/>
<rect x="460.25" y="247.70" width="3.9" height="3.8" rx="1" fill="#f8f8f8" stroke="#262626" stroke-width="0.85"/>
<rect x="540.25" y="237.70" width="3.9" height="3.8" rx="1" fill="#f8f8f8" stroke="#262626" stroke-width="0.85"/>
<rect x="220.25" y="317.70" width="3.9" height="3.8" rx="1" fill="#f8f8f8" stroke="#262626" stroke-width="0.85"/>
<rect x="220.25" y="327.70" width="3.9" height="3.8" rx="1" fill="#f8f8f8" stroke="#262626" stroke-width="0.85"/>
<rect x="220.25" y="337.70" width="3.9" height="3.8" rx="1" fill="#f8f8f8" stroke="#262626" stroke-width="0.85"/>
<rect x="330.25" y="327.70" width="3.9" height="3.8" rx="1" fill="#f8f8f8" stroke="#262626" stroke-width="0.85"/>
<rect x="330.25" y="347.70" width="3.9" height="3.8" rx="1" fill="#f8f8f8" stroke="#262626" stroke-width="0.85"/>
<rect x="330.25" y="357.70" width="3.9" height="3.8" rx="1" fill="#f8f8f8" stroke="#262626" stroke-width="0.85"/>
<rect x="330.25" y="367.70" width="3.9" height="3.8" rx="1" fill="#f8f8f8" stroke="#262626" stroke-width="0.85"/>
<rect x="330.25" y="377.70" width="3.9" height="3.8" rx="1" fill="#f8f8f8" stroke="#262626" stroke-width="0.85"/>
<rect x="550.25" y="327.70" width="3.9" height="3.8" rx="1" fill="#f8f8f8" stroke="#262626" stroke-width="0.85"/>
<rect x="630.25" y="337.70" width="3.9" height="3.8" rx="1" fill="#f8f8f8" stroke="#262626" stroke-width="0.85"/>
<rect x="630.25" y="347.70" width="3.9" height="3.8" rx="1" fill="#f8f8f8" stroke="#262626" stroke-width="0.85"/>
<rect x="490.25" y="467.70" width="3.9" height="3.8" rx="1" fill="#f8f8f8" stroke="#262626" stroke-width="0.85"/>
<rect x="550.25" y="477.70" width="3.9" height="3.8" rx="1" fill="#f8f8f8" stroke="#262626" stroke-width="0.85"/>
<rect x="550.25" y="487.70" width="3.9" height="3.8" rx="1" fill="#f8f8f8" stroke="#262626" stroke-width="0.85"/>
<rect x="550.25" y="497.70" width="3.9" height="3.8" rx="1" fill="#f8f8f8" stroke="#262626" stroke-width="0.85"/>
<rect x="780.25" y="237.70" width="3.9" height="3.8" rx="1" fill="#f8f8f8" stroke="#262626" stroke-width="0.85"/>
<rect x="780.25" y="247.70" width="3.9" height="3.8" rx="1" fill="#f8f8f8" stroke="#262626" stroke-width="0.85"/>
<rect x="780.25" y="257.70" width="3.9" height="3.8" rx="1" fill="#f8f8f8" stroke="#262626" stroke-width="0.85"/>
<rect x="780.25" y="267.70" width="3.9" height="3.8" rx="1" fill="#f8f8f8" stroke="#262626" stroke-width="0.85"/>
<rect x="880.25" y="247.70" width="3.9" height="3.8" rx="1" fill="#f8f8f8" stroke="#262626" stroke-width="0.85"/>
<rect x="880.25" y="267.70" width="3.9" height="3.8" rx="1" fill="#f8f8f8" stroke="#262626" stroke-width="0.85"/>
<rect x="880.25" y="277.70" width="3.9" height="3.8" rx="1" fill="#f8f8f8" stroke="#262626" stroke-width="0.85"/>
<rect x="860.25" y="167.70" width="3.9" height="3.8" rx="1" fill="#f8f8f8" stroke="#262626" stroke-width="0.85"/>
<rect x="860.25" y="177.70" width="3.9" height="3.8" rx="1" fill="#f8f8f8" stroke="#262626" stroke-width="0.85"/>
<rect x="950.25" y="157.70" width="3.9" height="3.8" rx="1" fill="#f8f8f8" stroke="#262626" stroke-width="0.85"/>
<rect x="930.25" y="267.70" width="3.9" height="3.8" rx="1" fill="#f8f8f8" stroke="#262626" stroke-width="0.85"/>
<rect x="1020.25" y="277.70" width="3.9" height="3.8" rx="1" fill="#f8f8f8" stroke="#262626" stroke-width="0.85"/>
<rect x="1020.25" y="287.70" width="3.9" height="3.8" rx="1" fill="#f8f8f8" stroke="#262626" stroke-width="0.85"/>
<rect x="1020.25" y="297.70" width="3.9" height="3.8" rx="1" fill="#f8f8f8" stroke="#262626" stroke-width="0.85"/>
<rect x="1020.25" y="307.70" width="3.9" height="3.8" rx="1" fill="#f8f8f8" stroke="#262626" stroke-width="0.85"/>
<g fill="none" stroke-width="2.1">
<path d="M1062.20 49.60 L59.70 49.60 Q52.20 49.60 52.20 57.10 L52.20 312.10 Q52.20 319.60 59.70 319.60 L222.20 319.60" stroke="#a19d78"/>
<path d="M1062.20 29.60 L29.70 29.60 Q22.20 29.60 22.20 37.10 L22.20 332.10 Q22.20 339.60 29.70 339.60 L222.20 339.60" stroke="#6ea2a2"/>
<path d="M1062.20 19.60 L99.70 19.60 Q92.20 19.60 92.20 27.10 L92.20 154.60 Q92.20 159.60 97.20 159.60 L102.20 159.60" stroke="#0000b4"/>
<path d="M152.20 159.60 L162.20 159.60" stroke="#0000b4"/>
<path d="M212.20 159.60 L242.20 159.60" stroke="#0000b4"/>
<path d="M442.20 239.60 L447.20 239.60 Q452.20 239.60 452.20 244.60 L452.20 244.60 Q452.20 249.60 457.20 249.60 L462.20 249.60" stroke="#0000b4"/>
<path d="M542.20 239.60 L547.20 239.60 Q552.20 239.60 552.20 244.60 L552.20 264.60 Q552.20 269.60 547.20 269.60 L547.20 269.60 Q542.20 269.60 542.20 274.60 L542.20 324.60 Q542.20 329.60 547.20 329.60 L552.20 329.60" stroke="#0000b4"/>
<path d="M302.20 179.60 L344.70 179.60 Q352.20 179.60 352.20 172.10 L352.20 77.10 Q352.20 69.60 359.70 69.60 L1062.20 69.60" stroke="#c07a12"/>
<path d="M302.20 189.60 L307.20 189.60 Q312.20 189.60 312.20 194.60 L312.20 242.10 Q312.20 249.60 319.70 249.60 L332.20 249.60" stroke="#c07a12"/>
<path d="M632.20 349.60 L664.70 349.60 Q672.20 349.60 672.20 342.10 L672.20 77.10 Q672.20 69.60 679.70 69.60 L1062.20 69.60" stroke="#c07a12"/>
<path d="M1022.20 309.60 L1027.20 309.60 Q1032.20 309.60 1032.20 314.60 L1032.20 314.60 Q1032.20 319.60 1037.20 319.60 L1062.20 319.60" stroke="#c07a12"/>
<path d="M882.20 269.60 L904.70 269.60 Q912.20 269.60 912.20 277.10 L912.20 282.10 Q912.20 289.60 904.70 289.60 L899.70 289.60 Q892.20 289.60 892.20 297.10 L892.20 392.10 Q892.20 399.60 884.70 399.60 L449.70 399.60 Q442.20 399.60 442.20 392.10 L442.20 297.10 Q442.20 289.60 434.70 289.60 L329.70 289.60 Q322.20 289.60 322.20 282.10 L322.20 274.60 Q322.20 269.60 327.20 269.60 L332.20 269.60" stroke="#c07a12"/>
<path d="M632.20 339.60 L694.70 339.60 Q702.20 339.60 702.20 332.10 L702.20 277.10 Q702.20 269.60 709.70 269.60 L782.20 269.60" stroke="#c07a12"/>
<path d="M552.20 499.60 L704.70 499.60 Q712.20 499.60 712.20 492.10 L712.20 257.10 Q712.20 249.60 719.70 249.60 L782.20 249.60" stroke="#b400b4"/>
<path d="M552.20 489.60 L684.70 489.60 Q692.20 489.60 692.20 482.10 L692.20 267.10 Q692.20 259.60 699.70 259.60 L782.20 259.60" stroke="#c07a12"/>
<path d="M302.20 169.60 L684.70 169.60 Q692.20 169.60 692.20 177.10 L692.20 252.10 Q692.20 259.60 699.70 259.60 L782.20 259.60" stroke="#c07a12"/>
<path d="M332.20 379.60 L374.70 379.60 Q382.20 379.60 382.20 387.10 L382.20 462.10 Q382.20 469.60 389.70 469.60 L492.20 469.60" stroke="#b400b4"/>
<path d="M552.20 479.60 L674.70 479.60 Q682.20 479.60 682.20 472.10 L682.20 187.10 Q682.20 179.60 689.70 179.60 L862.20 179.60" stroke="#b400b4"/>
<path d="M882.20 279.60 L894.70 279.60 Q902.20 279.60 902.20 272.10 L902.20 217.10 Q902.20 209.60 894.70 209.60 L859.70 209.60 Q852.20 209.60 852.20 202.10 L852.20 174.60 Q852.20 169.60 857.20 169.60 L862.20 169.60" stroke="#b400b4"/>
<path d="M952.20 159.60 L957.20 159.60 Q962.20 159.60 962.20 164.60 L962.20 212.10 Q962.20 219.60 954.70 219.60 L929.70 219.60 Q922.20 219.60 922.20 227.10 L922.20 264.60 Q922.20 269.60 927.20 269.60 L932.20 269.60" stroke="#b400b4"/>
<path d="M1022.20 279.60 L1062.20 279.60" stroke="#b400b4"/>
<path d="M1022.20 289.60 L1062.20 289.60" stroke="#b400b4"/>
<path d="M1022.20 299.60 L1062.20 299.60" stroke="#b400b4"/>
</g>
</svg>
</body></html>
